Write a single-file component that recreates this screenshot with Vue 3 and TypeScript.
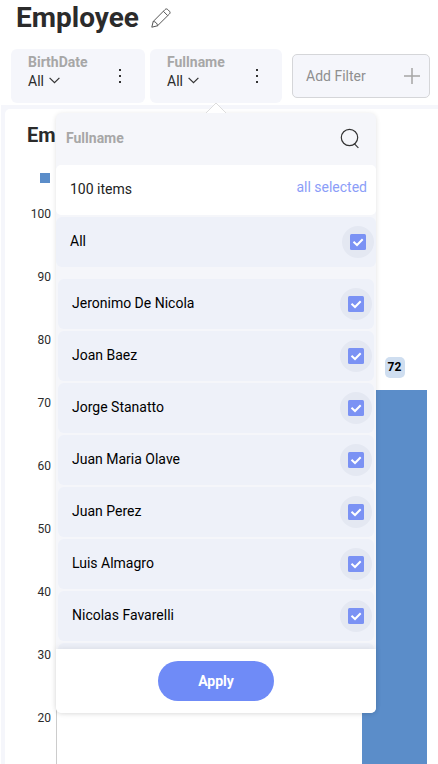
<script setup lang="ts">
import { ref } from 'vue'

interface Person {
  name: string
  selected: boolean
}

const filters: string[] = ['BirthDate', 'Fullname']
const ticks: number[] = [100, 90, 80, 70, 60, 50, 40, 30, 20]
const allSelected = ref(true)
const people = ref<Person[]>(
  [
    'Jeronimo De Nicola',
    'Joan Baez',
    'Jorge Stanatto',
    'Juan Maria Olave',
    'Juan Perez',
    'Luis Almagro',
    'Nicolas Favarelli',
  ].map((name) => ({ name, selected: true })),
)

function toggleAll() {
  allSelected.value = !allSelected.value
  people.value.forEach((p) => (p.selected = allSelected.value))
}
</script>

<template>
  <div class="page">
    <header class="title">
      <h1>Employee</h1>
      <svg class="pencil" width="20" height="20" viewBox="0 0 20 20">
        <path d="M.8 19.200 2.200 13.500 14 1.600c.9-.9 1.900-.9 2.800 0l1.600 1.600c.9.9.9 1.900 0 2.800L6.500 17.800Z M12.400 3.300l4.300 4.300 M2.200 13.500c2.200-.1 4.400 2.100 4.300 4.300" />
      </svg>
    </header>

    <div class="filters">
      <div v-for="f in filters" :key="f" class="chip">
        <div class="chip-text">
          <span class="chip-name">{{ f }}</span>
          <span class="chip-value">
            All
            <svg width="11" height="7" viewBox="0 0 11 7"><path d="M.6.8 5.500 5.700 10.400.8" /></svg>
          </span>
        </div>
        <svg class="dots" width="4" height="16" viewBox="0 0 4 16">
          <rect x="1" y="1" width="2" height="2" />
          <rect x="1" y="7" width="2" height="2" />
          <rect x="1" y="13" width="2" height="2" />
        </svg>
      </div>
      <button class="add">
        <span>Add Filter</span>
        <svg width="16" height="16" viewBox="0 0 16 16"><path d="M0 8H16M8 0V16" /></svg>
      </button>
    </div>

    <main class="board">
      <section class="card">
        <h2>Em</h2>
        <div class="legend"></div>
        <div class="chart">
          <div class="axis">
            <span v-for="t in ticks" :key="t">{{ t }}</span>
          </div>
          <div class="plot">
            <div class="column">
              <span class="value">72</span>
              <div class="bar"></div>
            </div>
          </div>
        </div>
      </section>
    </main>

    <div class="popup">
      <svg class="caret" width="20" height="11" viewBox="0 0 20 11"><path d="M0 11 10 1 20 11" /></svg>
      <div class="search">
        <span>Fullname</span>
        <svg width="20" height="21" viewBox="0 0 20 21">
          <circle cx="9.500" cy="9.500" r="8.200" />
          <path d="M14.200 15.700 18.400 19.900" />
        </svg>
      </div>
      <div class="summary">
        <span>100 items</span>
        <a>all selected</a>
      </div>
      <div class="row all" @click="toggleAll">
        <span>All</span>
        <i class="halo">
          <svg width="16" height="16" viewBox="0 0 16 16">
            <rect width="16" height="16" rx="1.500" />
            <path v-if="allSelected" d="M3.500 7.800 7 11 12.700 5.200" />
          </svg>
        </i>
      </div>
      <div class="list">
        <div v-for="p in people" :key="p.name" class="row" @click="p.selected = !p.selected">
          <span>{{ p.name }}</span>
          <i class="halo">
            <svg width="16" height="16" viewBox="0 0 16 16">
              <rect width="16" height="16" rx="1.500" />
              <path v-if="p.selected" d="M3.500 7.800 7 11 12.700 5.200" />
            </svg>
          </i>
        </div>
        <div class="row"></div>
      </div>
      <footer class="actions">
        <button class="apply">Apply</button>
      </footer>
    </div>
  </div>
</template>

<style>
body {
  margin: 0;
  background: #fff;
  overflow: hidden;
}
</style>

<style scoped>
* {
  box-sizing: border-box;
}
.page {
  position: relative;
  width: 438px;
  height: 764px;
  overflow: hidden;
  display: flex;
  flex-direction: column;
  font-family: Roboto, "Liberation Sans", sans-serif;
  color: #2b2b2b;
}
svg {
  display: block;
  flex: none;
  fill: none;
  stroke: #333;
  stroke-width: 1.200;
}
button {
  font-family: inherit;
}
.title {
  flex: none;
  height: 49px;
  padding: 0 0 0 16px;
  display: flex;
  align-items: flex-start;
  gap: 12px;
}
h1 {
  margin: 0;
  font-size: 28px;
  line-height: 35px;
  font-weight: 700;
}
.pencil {
  margin-top: 8px;
  stroke-width: 1;
  stroke: #555;
}
.filters {
  flex: none;
  height: 56px;
  padding-left: 11px;
  display: flex;
  align-items: flex-start;
}
.chip {
  width: 134px;
  height: 54px;
  margin-right: 5px;
  padding: 4px 23px 0 17px;
  border-radius: 6px;
  background: #f5f6fb;
  display: flex;
  justify-content: space-between;
}
.chip + .chip {
  width: 132px;
  margin-right: 10px;
}
.chip-text {
  display: flex;
  flex-direction: column;
}
.chip-name {
  font-size: 14px;
  line-height: 18px;
  font-weight: 700;
  color: #a7a7a7;
}
.chip-value {
  display: flex;
  align-items: center;
  gap: 5px;
  font-size: 14px;
  line-height: 20px;
}
.chip-value svg {
  margin-top: -1px;
}
.dots {
  margin-top: 15px;
  fill: #333;
  stroke: none;
}
.add {
  width: 138px;
  height: 44px;
  margin-top: 5px;
  padding: 0 9px 0 13px;
  display: flex;
  align-items: center;
  justify-content: space-between;
  border: 1px solid #d5d6d9;
  border-radius: 5px;
  background: #f5f6fb;
  color: #8f8f8f;
  font-size: 14px;
}
.add svg {
  stroke: #a5a5a5;
  stroke-width: 1.500;
}
.board {
  flex: 1;
  min-height: 0;
  margin-left: 1px;
  padding: 4px 0 0 4px;
  background: #f5f6fb;
}
.card {
  height: 100%;
  padding-top: 14px;
  border-radius: 5px 0 0 0;
  background: #fff;
  overflow: hidden;
}
h2 {
  margin: 0 0 0 22px;
  font-size: 20px;
  line-height: 24px;
  font-weight: 700;
}
.legend {
  width: 10px;
  height: 10px;
  margin: 26px 0 0 35px;
  background: #5b8dc9;
}
.chart {
  display: flex;
}
.axis {
  width: 46px;
  padding-top: 23px;
  display: flex;
  flex-direction: column;
  gap: 47px;
  font-size: 12px;
  line-height: 16px;
  text-align: right;
}
.plot {
  flex: 1;
  height: 583px;
  margin-left: 5px;
  padding-right: 11px;
  border-left: 1px solid #ccc;
  display: flex;
  justify-content: flex-end;
}
.column {
  width: 65px;
  padding-top: 174px;
  display: flex;
  flex-direction: column;
  align-items: center;
}
.value {
  width: 20px;
  height: 21px;
  border-radius: 5px;
  background: #cfdef0;
  color: #000;
  font-size: 12px;
  line-height: 21px;
  font-weight: 700;
  text-align: center;
}
.bar {
  flex: 1;
  width: 65px;
  margin-top: 12px;
  background: #5b8dc9;
}
.popup {
  position: absolute;
  left: 56px;
  top: 113px;
  width: 320px;
  height: 600px;
  display: flex;
  flex-direction: column;
  border-radius: 6px;
  background: #f5f6fa;
  box-shadow: 0 1px 5px rgba(0, 0, 0, 0.12);
  font-size: 14px;
  color: #000;
}
.caret {
  position: absolute;
  left: 150px;
  top: -11px;
  fill: #fff;
  stroke: #ddd;
  stroke-width: 1;
}
.search {
  flex: none;
  height: 52px;
  padding: 0 16px 2px 10px;
  display: flex;
  align-items: center;
  justify-content: space-between;
  font-weight: 700;
  color: #a7a7a7;
}
.summary {
  flex: none;
  height: 50px;
  padding: 0 9px 2px 14px;
  display: flex;
  align-items: center;
  justify-content: space-between;
  border-radius: 5px;
  background: #fff;
  color: #222;
}
.summary a {
  margin-top: -4px;
  color: #8b9df8;
}
.row {
  flex: none;
  height: 50px;
  padding: 0 2px 0 14px;
  display: flex;
  align-items: center;
  justify-content: space-between;
  border-radius: 6px;
  background: #eef1f9;
}
.row > span {
  margin-top: -2px;
}
.all {
  margin-top: 2px;
}
.halo {
  width: 32px;
  height: 32px;
  display: flex;
  align-items: center;
  justify-content: center;
  border-radius: 50%;
  background: #e4e8f2;
}
.halo svg {
  fill: #7b92f4;
  stroke: none;
}
.halo path {
  fill: none;
  stroke: #fff;
  stroke-width: 2;
}
.list {
  flex: none;
  height: 382px;
  padding: 12px 2px 0;
  overflow: hidden;
  display: flex;
  flex-direction: column;
  gap: 2px;
}
.actions {
  position: relative;
  flex: 1;
  display: flex;
  align-items: center;
  justify-content: center;
  border-radius: 0 0 5px 5px;
  background: #fff;
  box-shadow: 0 -2px 6px rgba(0, 0, 0, 0.07);
}
.apply {
  width: 116px;
  height: 40px;
  border: 0;
  border-radius: 20px;
  background: #6f8bf7;
  color: #fff;
  font-size: 14px;
  font-weight: 700;
}
</style>
